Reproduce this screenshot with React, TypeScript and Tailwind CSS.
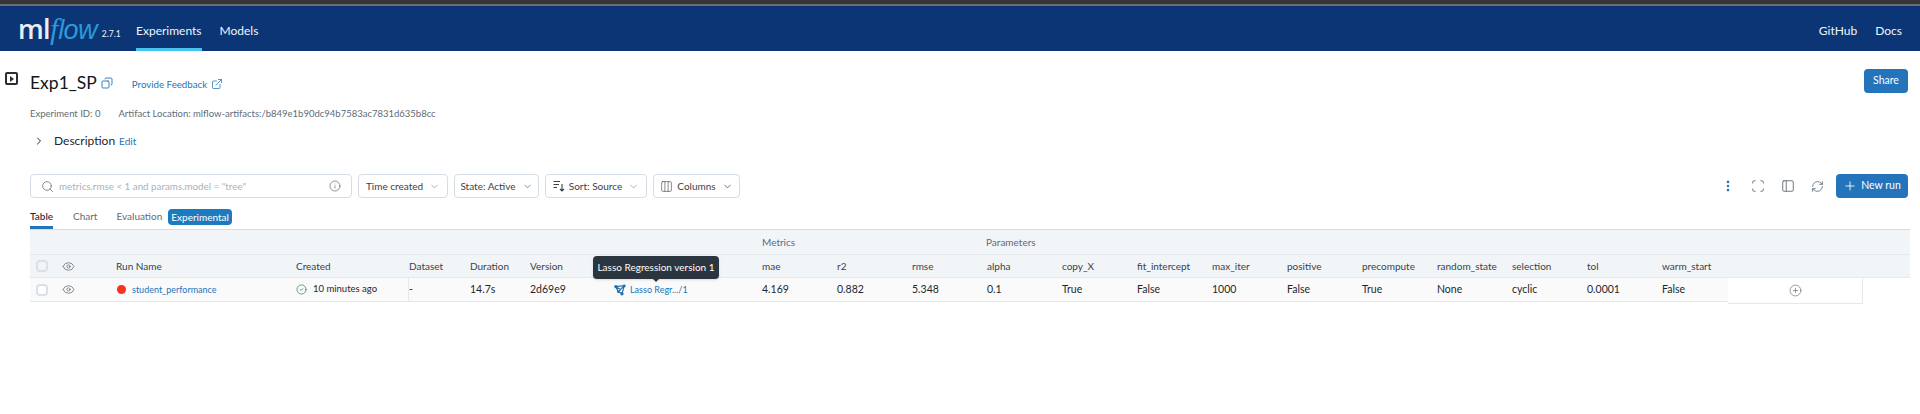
import { ChevronDown, ChevronRight, Columns3, Copy, EllipsisVertical, ExternalLink, Eye, Info, PanelLeft, Plus, RefreshCw, Scan, Search, CirclePlus, CircleCheck } from 'lucide-react'

const metricCols = ['mae', 'r2', 'rmse']
const paramCols = ['alpha', 'copy_X', 'fit_intercept', 'max_iter', 'positive', 'precompute', 'random_state', 'selection', 'tol', 'warm_start']
const values = ['4.169', '0.882', '5.348', '0.1', 'True', 'False', '1000', 'False', 'True', 'None', 'cyclic', '0.0001', 'False']

function FilterButton({ children, width, chevron = 'text-[#37424d]' }: { children: React.ReactNode; width: string; chevron?: string }) {
  return (
    <button className={`flex h-6 items-center justify-center gap-1.5 rounded border border-[#d5dde6] bg-white text-[10px] text-[#37424d] ${width}`}>
      {children}
      <ChevronDown size={11} strokeWidth={1.6} className={chevron} />
    </button>
  )
}

function SortIcon() {
  return (
    <svg width="12" height="12" viewBox="0 0 12 12" fill="none" stroke="#37424d" strokeWidth="1.1" className="-mr-0.5">
      <path d="M0.5 1.5H7M0.5 4.5H6M0.5 7.5H4" />
      <path d="M9 4V11M7 9L9 11L11 9" />
    </svg>
  )
}

function ModelIcon() {
  return (
    <svg width="12" height="12" viewBox="0 0 14 14" fill="none" className="mr-1 shrink-0">
      <path d="M2 3 L12 2 L9.5 11 L5 9 Z M2 3 L7.5 6.5 L12 2 M7.5 6.5 L5 9" stroke="#1f6fb2" strokeWidth="1.4" />
      <circle cx="2.2" cy="3" r="1.9" fill="#1f6fb2" />
      <circle cx="12" cy="2.2" r="1.6" fill="#1f6fb2" />
      <circle cx="9.3" cy="11.4" r="1.9" fill="#1f6fb2" />
      <circle cx="5" cy="9" r="1.5" fill="#1f6fb2" />
    </svg>
  )
}

export default function App() {
  return (
    <div className="h-[414px] overflow-hidden bg-white font-['Lato',sans-serif] text-[10px] text-[#1f272d]">
      {/* Window strip */}
      <div className="h-1 bg-[#363636]" />
      <div className="h-0.5 bg-[#6e6e6e]" />

      {/* Header */}
      <header className="flex h-[45px] items-stretch bg-[#0b3574] pl-[18px] pr-[18px] text-[12px] text-[#eef5fb]">
        <div className="flex w-[100px] items-center gap-[5px]">
          <span className="flex items-baseline text-[27px] leading-none">
            <span className="font-['Open_Sans',sans-serif] font-semibold tracking-tight text-[#e9eef4]">ml</span>
            <span className="font-['Liberation_Serif',serif] text-[30px] italic text-[#2b9ad8]">f</span>
            <span className="font-['Liberation_Sans',sans-serif] italic tracking-tight text-[#2b9ad8]">low</span>
          </span>
          <span className="mt-3 text-[8.5px]">2.7.1</span>
        </div>
        <nav className="ml-[18px] flex gap-[18px]">
          <a className="flex items-center border-b-[3px] border-[#43c3ee] pt-2">Experiments</a>
          <a className="flex items-center border-b-[3px] border-transparent pt-2">Models</a>
        </nav>
        <div className="ml-auto flex items-center gap-[18px] pt-[5px]">
          <a>GitHub</a>
          <a>Docs</a>
        </div>
      </header>

      {/* Title */}
      <div className="flex h-[42px] pl-[5px] pr-3 pt-[18px]">
        <div className="mt-[3px] flex h-[13px] w-[13px] items-center justify-center rounded-[2px] border-2 border-[#2a2f34]">
          <span className="ml-px border-y-[3px] border-l-[4px] border-y-transparent border-l-[#2a2f34]" />
        </div>
        <h1 className="ml-3 mt-[2px] text-[17.5px] leading-6 text-[#11171c]">Exp1_SP</h1>
        <Copy size={12} strokeWidth={1.8} className="ml-1 mt-2 -scale-x-100 text-[#2374bb]" />
        <a className="ml-[19px] mt-2 text-[9.7px] leading-[14px] text-[#2374bb]">Provide Feedback</a>
        <ExternalLink size={12} strokeWidth={1.5} className="ml-1 mt-[9px] text-[#2374bb]" />
        <button className="ml-auto h-6 w-11 rounded bg-[#2374bb] text-[10.5px] text-white">Share</button>
      </div>

      <div className="ml-[30px] mt-[13px] flex gap-[18px] text-[9.5px] leading-[15px] text-[#5f6b76]">
        <span>Experiment ID: 0</span>
        <span>Artifact Location: mlflow-artifacts:/b849e1b90dc94b7583ac7831d635b8cc</span>
      </div>

      <div className="ml-[33px] mt-[11px] flex h-[18px] items-center">
        <ChevronRight size={12} strokeWidth={2} />
        <span className="ml-[9px] text-[12px]">Description</span>
        <a className="ml-1 text-[10px] text-[#2374bb]">Edit</a>
      </div>

      {/* Toolbar */}
      <div className="ml-[30px] mr-3 mt-6 flex gap-[6px]">
        <div className="flex h-6 w-[322px] items-center rounded border border-[#d5dde6] px-2.5 text-[#a9b2ba]">
          <Search size={13} strokeWidth={1.4} className="text-[#5f6b76]" />
          <span className="ml-[5px] text-[9.8px]">metrics.rmse &lt; 1 and params.model = "tree"</span>
          <Info size={12} strokeWidth={1.4} className="ml-auto text-[#5f6b76]" />
        </div>
        <FilterButton width="w-[90px]" chevron="text-[#8995a1]">Time created</FilterButton>
        <FilterButton width="w-[85px]" chevron="text-[#5f6b76]">State: Active</FilterButton>
        <FilterButton width="w-[102px]" chevron="text-[#8995a1]">
          <SortIcon />
          Sort: Source
        </FilterButton>
        <FilterButton width="w-[87px]">
          <Columns3 size={13} strokeWidth={1.1} className="-mr-0.5" />
          Columns
        </FilterButton>
        <div className="ml-auto flex items-center gap-4 text-[#5f6b76]">
          <EllipsisVertical size={14} strokeWidth={2.5} className="text-[#2374bb]" />
          <Scan size={14} strokeWidth={1.5} />
          <PanelLeft size={14} strokeWidth={1.5} />
          <RefreshCw size={13} strokeWidth={1.5} />
          <button className="-ml-1 flex h-6 w-[72px] items-center justify-center gap-1 rounded bg-[#2374bb] text-[10.5px] text-white">
            <Plus size={14} strokeWidth={1.5} />
            New run
          </button>
        </div>
      </div>

      {/* Tabs */}
      <div className="ml-[30px] mr-[10px] mt-[6px] flex h-[25px] items-center text-[10px]">
        <span className="flex h-full w-[23px] items-center border-b-[3px] border-[#2374bb] pt-[3px] font-medium">Table</span>
        <span className="ml-5 text-[#5f6b76]">Chart</span>
        <span className="ml-[19px] text-[#5f6b76]">Evaluation</span>
        <span className="ml-1.5 rounded bg-[#1c7bbf] px-[3px] leading-4 text-white">Experimental</span>
      </div>

      {/* Runs table */}
      <div className="ml-[30px] mr-[10px] border-t border-[#d5dde6]">
        <div className="flex h-6 items-center bg-[#f2f5f8] text-[10px] text-[#5f6b76]">
          <span className="ml-[732px] w-[224px]">Metrics</span>
          <span>Parameters</span>
        </div>
        <div className="flex h-6 items-center border-y border-[#e4e9ee] bg-[#f2f5f8] text-[10px] text-[#37424d]">
          <span className="ml-1.5 h-3 w-3 rounded-sm border-2 border-[#d9e0e7] bg-[#f2f5f8]" />
          <Eye size={13} strokeWidth={1.4} className="ml-[14px] text-[#5f6b76]" />
          <span className="ml-[41px] w-[180px]">Run Name</span>
          <span className="w-[113px]">Created</span>
          <span className="w-[61px]">Dataset</span>
          <span className="w-[60px]">Duration</span>
          <span className="w-[232px]">Version</span>
          {metricCols.concat(paramCols).map((c) => (
            <span key={c} className="w-[75px] shrink-0">{c}</span>
          ))}
        </div>
        <div className="flex items-stretch">
          <div className="flex h-6 w-[1698px] shrink-0 items-center border-b border-[#e4e9ee] bg-[#fafafa] text-[10.5px] text-[#1f272d]">
            <span className="ml-1.5 h-3 w-3 shrink-0 rounded-sm border-2 border-[#d9e0e7] bg-white" />
            <Eye size={13} strokeWidth={1.4} className="ml-[14px] shrink-0 text-[#5f6b76]" />
            <span className="ml-[41px] flex w-[180px] shrink-0 items-center">
              <span className="ml-px h-[9px] w-[9px] rounded-full bg-[#f5331f]" />
              <a className="ml-[6px] text-[9px] text-[#2374bb]">student_performance</a>
            </span>
            <span className="flex w-[104px] shrink-0 items-center">
              <CircleCheck size={11} strokeWidth={1.5} className="text-[#277c43]" />
              <span className="ml-1.5 text-[9.5px]">10 minutes ago</span>
            </span>
            <span className="h-full w-[9px] shrink-0 border-r border-[#e4e9ee]" />
            <span className="w-[61px] shrink-0">-</span>
            <span className="w-[60px] shrink-0">14.7s</span>
            <span className="w-[80px] shrink-0">2d69e9</span>
            <span className="relative flex w-[152px] shrink-0 items-center pl-1 text-[9px] text-[#2374bb]">
              <ModelIcon />
              Lasso Regr.../1
              <span className="absolute -left-[17px] -top-[27px] flex h-[23px] w-[126px] items-center justify-center whitespace-nowrap rounded bg-[#2b353f] text-[10px] text-white shadow">
                Lasso Regression version 1
                <span className="absolute -bottom-[3px] left-[59px] border-x-4 border-t-4 border-x-transparent border-t-[#2b353f]" />
              </span>
            </span>
            {values.map((v, i) => (
              <span key={i} className={i === 12 ? 'w-[66px] shrink-0' : 'w-[75px] shrink-0'}>{v}</span>
            ))}
          </div>
          <div className="flex h-[26px] w-[135px] shrink-0 items-center justify-center border-b border-r border-[#e4e9ee]">
            <CirclePlus size={13} strokeWidth={1.2} className="text-[#5f6b76]" />
          </div>
        </div>
      </div>
    </div>
  )
}
